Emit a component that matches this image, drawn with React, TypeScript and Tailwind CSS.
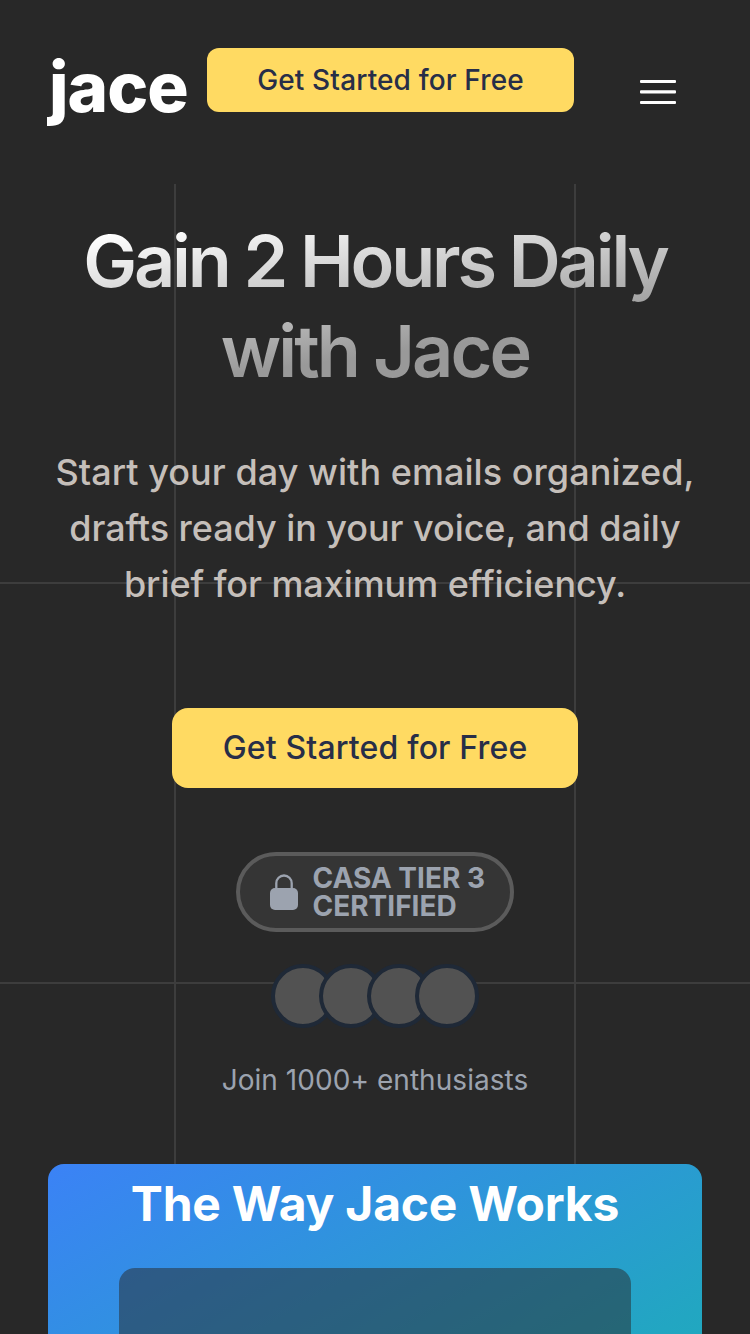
const avatars = [0, 1, 2, 3];

export default function App() {
  return (
    <div className="relative flex h-[1334px] w-[750px] flex-col overflow-hidden bg-[#282828] font-['Inter',sans-serif]">
      <div className="absolute inset-x-0 bottom-0 top-[184px]" aria-hidden="true">
        <div className="absolute inset-y-0 left-[174px] w-0.5 bg-[#3d3d3d]" />
        <div className="absolute inset-y-0 left-[574px] w-0.5 bg-[#3d3d3d]" />
        <div className="absolute inset-x-0 top-[398px] h-0.5 bg-[#3d3d3d]" />
        <div className="absolute inset-x-0 top-[798px] h-0.5 bg-[#3d3d3d]" />
      </div>

      <header className="relative flex h-[184px] shrink-0 items-start pl-12 pt-12">
        <div className="h-20 w-[159px] whitespace-nowrap pl-px text-[69px] font-extrabold leading-[78px] tracking-[-1px] text-white">
          jace
        </div>
        <button className="h-16 w-[367px] rounded-xl bg-[#ffda62] text-[28px] font-medium tracking-[0.14px] text-[#272e48]">
          Get Started for Free
        </button>
        <button className="ml-[66px] mt-8" aria-label="Menu">
          <svg width="36" height="24" viewBox="0 0 36 24" fill="white">
            <rect width="36" height="3" rx="1" />
            <rect y="10.3" width="36" height="3.2" rx="1" />
            <rect y="21" width="36" height="3" rx="1" />
          </svg>
        </button>
      </header>

      <main className="relative flex flex-1 flex-col items-center px-12 pt-8">
        <h1 className="whitespace-nowrap bg-[linear-gradient(172deg,#ffffff_23px,#999999_180px)] bg-clip-text px-3 text-center text-[72px] font-semibold leading-[90px] tracking-[-3.2px] text-transparent">
          Gain 2 Hours Daily
          <br />
          <span className="tracking-[-2.9px]">with Jace</span>
        </h1>
        <p className="mt-12 whitespace-nowrap text-center text-[36px] font-medium leading-[56px] tracking-[0.05px] text-[#c5bfba]">
          Start your day with emails organized,
          <br />
          <span className="tracking-[-0.06px]">
            drafts ready in your voice, and daily
            <br />
            brief for maximum efficiency.
          </span>
        </p>
        <button className="mt-24 h-20 w-[406px] shrink-0 rounded-2xl bg-[#ffda62] text-[32px] font-medium tracking-[0.16px] text-[#272e48]">
          Get Started for Free
        </button>
        <div className="mt-16 flex h-20 w-[278px] shrink-0 items-center rounded-full border-4 border-[#5b5b5b] bg-[#353535] pl-[30px] text-[#9ca3af]">
          <svg className="shrink-0" width="28" height="36" viewBox="0 0 28 36" fill="none">
            <path d="M6.3 15V9.2a7.7 7.7 0 0 1 15.4 0V15" stroke="currentColor" strokeWidth="2.3" />
            <rect y="14" width="28" height="22" rx="5" fill="currentColor" />
          </svg>
          <span className="ml-[14.5px] whitespace-nowrap text-[28px] font-bold leading-7">
            CASA TIER 3
            <br />
            CERTIFIED
          </span>
        </div>
        <div className="mt-8 flex shrink-0 -space-x-4">
          {avatars.map((id) => (
            <div key={id} className="size-16 rounded-full border-4 border-[#1f2937] bg-[#525252]" />
          ))}
        </div>
        <p className="mt-8 text-[28px] leading-10 tracking-[0.05px] text-[#9ca3af]">Join 1000+ enthusiasts</p>
        <section className="mt-16 flex h-[640px] w-[654px] shrink-0 flex-col items-center rounded-t-2xl bg-[linear-gradient(150deg,#3b82f6_0px,#22a6c2_450px,#14b8a6_750px)]">
          <h2 className="pt-2 text-[48px] font-bold leading-[64px] tracking-[-0.22px] text-white">The Way Jace Works</h2>
          <div className="mt-8 w-[512px] flex-1 rounded-2xl bg-[#282828]/50" />
        </section>
      </main>
    </div>
  );
}
